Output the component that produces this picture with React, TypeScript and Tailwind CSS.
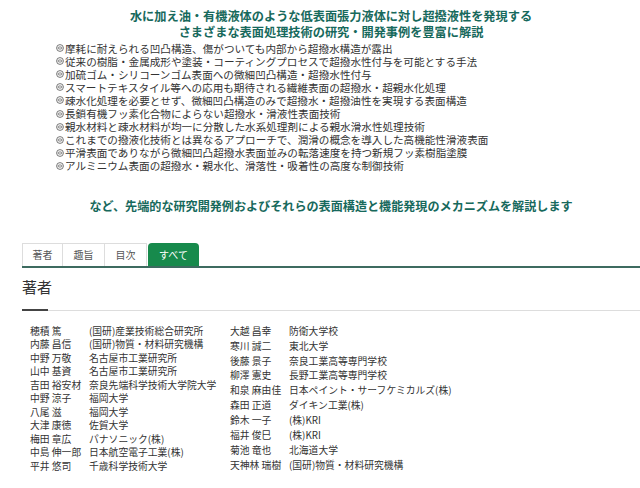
import React from "react";

const bullets = [
  "摩耗に耐えられる凹凸構造、傷がついても内部から超撥水構造が露出",
  "従来の樹脂・金属成形や塗装・コーティングプロセスで超撥水性付与を可能とする手法",
  "加硫ゴム・シリコーンゴム表面への微細凹凸構造・超撥水性付与",
  "スマートテキスタイル等への応用も期待される繊維表面の超撥水・超親水化処理",
  "疎水化処理を必要とせず、微細凹凸構造のみで超撥水・超撥油性を実現する表面構造",
  "長鎖有機フッ素化合物によらない超撥水・滑液性表面技術",
  "親水材料と疎水材料が均一に分散した水系処理剤による親水滑水性処理技術",
  "これまでの撥液化技術とは異なるアプローチで、潤滑の概念を導入した高機能性滑液表面",
  "平滑表面でありながら微細凹凸超撥水表面並みの転落速度を持つ新規フッ素樹脂塗膜",
  "アルミニウム表面の超撥水・親水化、滑落性・吸着性の高度な制御技術",
];

const left: [string, string][] = [
  ["穂積 篤", "(国研)産業技術総合研究所"],
  ["内藤 昌信", "(国研)物質・材料研究機構"],
  ["中野 万敬", "名古屋市工業研究所"],
  ["山中 基資", "名古屋市工業研究所"],
  ["吉田 裕安材", "奈良先端科学技術大学院大学"],
  ["中野 涼子", "福岡大学"],
  ["八尾 滋", "福岡大学"],
  ["大津 康徳", "佐賀大学"],
  ["梅田 章広", "パナソニック(株)"],
  ["中島 伸一郎", "日本航空電子工業(株)"],
  ["平井 悠司", "千歳科学技術大学"],
];

const right: [string, string][] = [
  ["大越 昌幸", "防衛大学校"],
  ["寒川 誠二", "東北大学"],
  ["後藤 景子", "奈良工業高等専門学校"],
  ["柳澤 憲史", "長野工業高等専門学校"],
  ["和泉 麻由佳", "日本ペイント・サーフケミカルズ(株)"],
  ["森田 正道", "ダイキン工業(株)"],
  ["鈴木 一子", "(株)KRI"],
  ["福井 俊巳", "(株)KRI"],
  ["菊池 竜也", "北海道大学"],
  ["天神林 瑞樹", "(国研)物質・材料研究機構"],
];

function Bullet() {
  return (
    <svg width="8" height="8" viewBox="0 0 8 8" className="shrink-0 mr-[1px]">
      <circle cx="4" cy="4" r="3.4" fill="none" stroke="#666" strokeWidth="0.9" />
      <ellipse cx="4" cy="4" rx="2" ry="1.1" fill="none" stroke="#666" strokeWidth="0.8" />
    </svg>
  );
}

function AuthorTable({ rows }: { rows: [string, string][] }) {
  return (
    <div className="grid grid-cols-[59px_1fr] text-[9.8px] leading-[13.5px] text-[#333] whitespace-nowrap">
      {rows.map(([n, a], i) => (
        <React.Fragment key={i}>
          <div>{n}</div>
          <div>{a}</div>
        </React.Fragment>
      ))}
    </div>
  );
}

export default function App() {
  return (
    <div className="w-[640px] h-[488px] bg-white overflow-hidden font-['Noto_Sans_CJK_JP','Noto_Sans',sans-serif]">
      <div className="pt-2 pl-[22px] text-center text-[#17695c] font-bold text-[12.2px] leading-[16px]">
        <p>水に加え油・有機液体のような低表面張力液体に対し超撥液性を発現する</p>
        <p>さまざまな表面処理技術の研究・開発事例を豊富に解説</p>
      </div>
      <ul className="mt-[1.5px] pl-[56px] text-[10.6px] leading-[13.1px] text-[#333] whitespace-nowrap">
        {bullets.map((b, i) => (
          <li key={i} className="flex items-center">
            <Bullet />
            <span>{b}</span>
          </li>
        ))}
      </ul>
      <p className="mt-[25.5px] pl-[22px] text-center text-[#17695c] font-bold text-[12.1px] leading-[16px]">
        など、先端的な研究開発例およびそれらの表面構造と機能発現のメカニズムを解説します
      </p>
      <div className="mt-[29px] ml-[22px] flex border-b-2 border-[#3d6b60] text-[10px] leading-[22px]">
        <div className="w-[41px] text-center text-[#555] border border-b-0 border-[#ddd]">著者</div>
        <div className="w-[42px] text-center text-[#555] border border-b-0 border-l-0 border-[#ddd]">趣旨</div>
        <div className="w-[42px] text-center text-[#555] border border-b-0 border-l-0 border-[#ddd]">目次</div>
        <div className="ml-[1px] w-[51px] text-center text-white bg-[#178a4c] rounded-t-[4px] pt-[1px]">すべて</div>
      </div>
      <div className="ml-[22px] mt-[9px] border-b border-[#ddd]">
        <div className="w-[26px] -mb-px border-b-2 border-[#444] pb-[12px] text-[15px] leading-[20px] text-[#333] whitespace-nowrap">
          著者
        </div>
      </div>
      <div className="ml-[30px] mt-[14px] grid grid-cols-[200px_1fr]">
        <AuthorTable rows={left} />
        <AuthorTable rows={right} />
      </div>
    </div>
  );
}
